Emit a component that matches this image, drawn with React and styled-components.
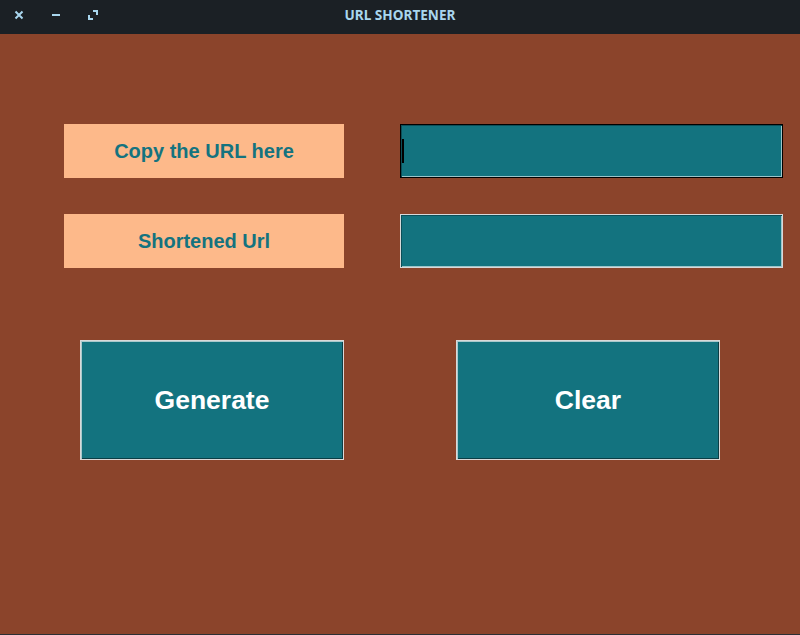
import React from 'react';
import styled, { createGlobalStyle } from 'styled-components';

const GlobalStyle = createGlobalStyle`
    html, body {
        margin: 0;
        padding: 0;
        background: #8b442b;
    }
    * {
        box-sizing: border-box;
    }
`;

function App() {
    return (
        <React.Fragment>
            <GlobalStyle />
            <Window>
                <TitleBar>
                    <Controls>
                        <CtrlButton aria-label="close">
                            <svg width="10" height="10" viewBox="0 0 10 10">
                                <path d="M1.5 1.5 L8.5 8.5 M8.5 1.5 L1.5 8.5" stroke="#a9d6ee" strokeWidth="2" />
                            </svg>
                        </CtrlButton>
                        <CtrlButton aria-label="minimize">
                            <svg width="10" height="10" viewBox="0 0 10 10">
                                <path d="M1 5 H9" stroke="#a9d6ee" strokeWidth="2" />
                            </svg>
                        </CtrlButton>
                        <CtrlButton aria-label="maximize">
                            <svg width="10" height="10" viewBox="0 0 10 10">
                                <path d="M5 1 H9 V5 M1 5 V9 H5" stroke="#a9d6ee" strokeWidth="2" fill="none" />
                            </svg>
                        </CtrlButton>
                    </Controls>
                    <Title>URL SHORTENER</Title>
                </TitleBar>
                <Body>
                    <Form>
                        <Label>Copy the URL here</Label>
                        <Entry focused>
                            <Caret />
                        </Entry>
                        <Label>Shortened Url</Label>
                        <Entry />
                    </Form>
                    <Actions>
                        <ActionButton>Generate</ActionButton>
                        <ActionButton>Clear</ActionButton>
                    </Actions>
                </Body>
            </Window>
        </React.Fragment>
    );
}

const Window = styled.div`
    width: 800px;
    height: 635px;
    display: flex;
    flex-direction: column;
    background: #8b442b;
    border-bottom: 1px solid #2b3034;
`;

const TitleBar = styled.div`
    position: relative;
    height: 34px;
    flex: none;
    background: #1b2025;
    display: flex;
    align-items: center;
    justify-content: center;
`;

const Controls = styled.div`
    position: absolute;
    left: 13px;
    top: 9px;
    display: flex;
    gap: 26px;
`;

const CtrlButton = styled.div`
    width: 11px;
    height: 11px;
    display: flex;
    align-items: center;
    justify-content: center;
`;

const Title = styled.div`
    font-family: "Noto Sans", "DejaVu Sans", sans-serif;
    font-weight: 700;
    font-size: 13.6px;
    color: #a9d6ee;
    margin-top: -6px;
`;

const Body = styled.div`
    flex: 1;
    padding: 90px 0 0 64px;
    display: flex;
    flex-direction: column;
`;

const Form = styled.div`
    display: grid;
    grid-template-columns: 280px 383px;
    grid-auto-rows: 54px;
    column-gap: 56px;
    row-gap: 36px;
`;

const Label = styled.div`
    background: #fdb98a;
    color: #14737f;
    font-family: "Liberation Sans", Arial, sans-serif;
    font-weight: 700;
    font-size: 20px;
    display: flex;
    align-items: center;
    justify-content: center;
`;

const Entry = styled.div`
    background: #13737f;
    border: 1px solid ${props => props.focused ? '#000000' : '#d9d9d9'};
    box-shadow: inset 1px 1px 0 #0c4f58, inset -1px -1px 0 #9cc5c9;
    display: flex;
    align-items: center;
    padding-left: 1px;
`;

const Caret = styled.span`
    width: 2px;
    height: 24px;
    background: #000;
`;

const Actions = styled.div`
    display: flex;
    gap: 112px;
    margin-top: 72px;
    padding-left: 16px;
`;

const ActionButton = styled.button`
    width: 264px;
    height: 120px;
    background: #13737f;
    color: #ffffff;
    font-family: "Liberation Sans", Arial, sans-serif;
    font-weight: 700;
    font-size: 26.5px;
    border: 1px solid #d9d9d9;
    box-shadow: inset 1px 1px 0 #a9c9cc, inset -1px -1px 0 #0b3e45;
    padding: 0;
    cursor: pointer;
`;

export default App;
